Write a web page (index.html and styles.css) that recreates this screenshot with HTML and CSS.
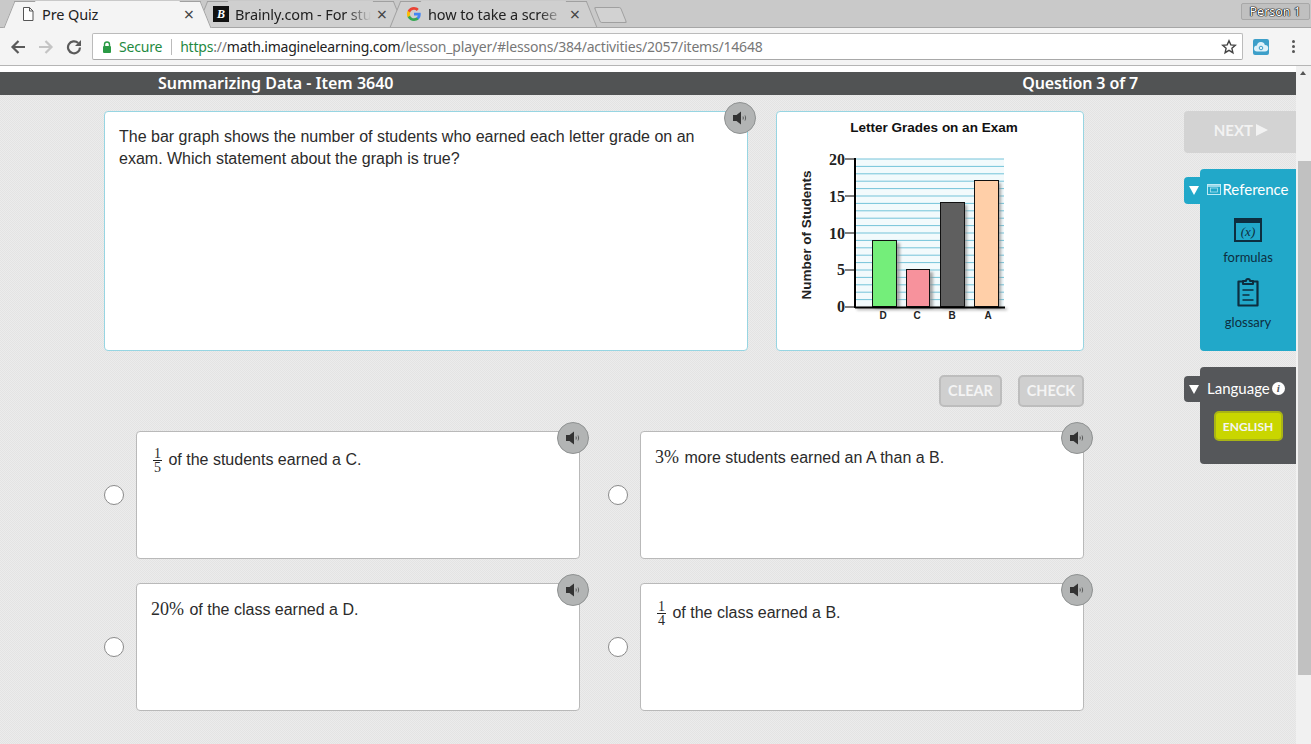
FILE: index.html
```html
<!DOCTYPE html>
<html lang="en">
<head>
  <meta charset="UTF-8" />
  <title>Pre Quiz</title>
  <link rel="stylesheet" href="styles.css">
</head>
<body>

  <div class="tabstrip">
    <div class="tab active">
      <svg class="favicon" viewBox="0 0 16 16"><path d="M3.500 1.500h6l3.500 3.500v9.500h-9.500z M9.500 1.500v3.500h3.500" fill="#fff" stroke="#555" stroke-width="1"/></svg>
      <span class="tab-title">Pre Quiz</span>
      <span class="tab-close">×</span>
    </div>
    <div class="tab">
      <span class="favicon brainly">B</span>
      <span class="tab-title">Brainly.com - For stu</span>
      <span class="tab-close">×</span>
    </div>
    <div class="tab">
      <svg class="favicon" viewBox="0 0 16 16">
        <path d="M14.700 8.200c0-.5 0-1-.1-1.400H8v2.700h3.800c-.2.900-.7 1.600-1.400 2.100v1.700h2.300c1.300-1.200 2-3 2-5.100z" fill="#4285f4"/>
        <path d="M8 15c1.900 0 3.500-.6 4.700-1.700l-2.300-1.700c-.6.400-1.400.7-2.400.7-1.800 0-3.400-1.200-3.900-2.900H1.700v1.800C2.900 13.500 5.300 15 8 15z" fill="#34a853"/>
        <path d="M4.100 9.400c-.3-.9-.3-1.900 0-2.800V4.800H1.700c-1 1.900-1 4.400 0 6.400z" fill="#fbbc05"/>
        <path d="M8 3.800c1 0 2 .4 2.700 1.100l2-2C11.500 1.700 9.800 1 8 1 5.300 1 2.900 2.500 1.700 4.800l2.400 1.800C4.600 5 6.200 3.800 8 3.800z" fill="#ea4335"/>
      </svg>
      <span class="tab-title">how to take a scree</span>
      <span class="tab-close">×</span>
    </div>
    <div class="newtab"></div>
    <div class="person">Person 1</div>
  </div>

  <div class="toolbar">
    <svg class="nav" viewBox="0 0 16 16"><path d="M15 8H2.500M8.500 2L2.500 8l6 6" fill="none" stroke="#5a5a5a" stroke-width="2.200"/></svg>
    <svg class="nav" viewBox="0 0 16 16"><path d="M1 8h12.500M7.500 2l6 6-6 6" fill="none" stroke="#c4c4c4" stroke-width="2.200"/></svg>
    <svg class="nav" viewBox="0 0 16 16"><path d="M14 8.500a6 6 0 1 1-1.800-4.500" fill="none" stroke="#5a5a5a" stroke-width="2.200"/><path d="M15 1v6H9z" fill="#5a5a5a"/></svg>
    <div class="omnibox">
      <svg class="lock" viewBox="0 0 12 14"><path d="M3.500 6V4.500a2.500 2.500 0 0 1 5 0V6" fill="none" stroke="#2a9a45" stroke-width="1.400"/><rect x="2" y="6" width="8" height="7" rx="1" fill="#2a9a45"/></svg>
      <span class="secure">Secure</span>
      <span class="url"><span class="scheme">https</span><span class="rest">://</span><span class="host">math.imaginelearning.com</span><span class="rest">/lesson_player/#lessons/384/activities/2057/items/14648</span></span>
      <svg class="star" viewBox="0 0 16 16"><path d="M8 1.800l1.800 4.100 4.500.4-3.400 3 1 4.400L8 11.400l-3.900 2.300 1-4.400-3.400-3 4.500-.4z" fill="none" stroke="#444" stroke-width="1.400"/></svg>
    </div>
    <div class="ext">
      <svg viewBox="0 0 16 16"><path d="M4 12.500a3 3 0 0 1 0-6 4 4 0 0 1 7.800-.6 3.300 3.300 0 0 1 .2 6.600z" fill="#dff2fa"/><circle cx="8" cy="9" r="1.800" fill="none" stroke="#3d9fc9" stroke-width="1"/></svg>
    </div>
    <div class="menu-dots"><i></i><i></i><i></i></div>
  </div>

  <div class="viewport">
    <div class="page">
      <div class="titlebar">
        <span>Summarizing Data - Item 3640</span>
        <span class="counter">Question 3 of 7</span>
      </div>

      <div class="content">
        <div class="lesson">
          <div class="top-row">
            <div class="card question">
              The bar graph shows the number of students who earned each letter grade on an exam. Which statement about the graph is true?
              <button class="speaker"><svg viewBox="0 0 16 16"><path d="M1 5h3.500L9 1.500v13L4.500 11H1z" fill="#333"/><path d="M11 6.500c.4.900.4 2.100 0 3M13 5.500c.8 1.500.8 3.500 0 5" fill="none" stroke="#333" stroke-width=".7"/></svg></button>
            </div>
            <div class="card graph">
              <svg viewBox="0 0 306 238" width="306" height="238">
                <defs>
                  <filter id="soft" x="-20%" y="-5%" width="160%" height="110%"><feGaussianBlur stdDeviation="1.500"/></filter>
                </defs>
                <text x="157" y="20" class="g-title">Letter Grades on an Exam</text>
                <rect x="80" y="47" width="147" height="148" fill="#f2fafc"/>
                <path d="M78 47h149M78 54.400h149M78 61.800h149M78 69.200h149M78 76.600h149M78 84h149M78 91.400h149M78 98.800h149M78 106.200h149M78 113.600h149M78 121h149M78 128.400h149M78 135.800h149M78 143.200h149M78 150.600h149M78 158h149M78 165.400h149M78 172.800h149M78 180.200h149M78 187.600h149" stroke="#74c3d9" stroke-width="1"/>
                <g fill="#888" filter="url(#soft)" opacity=".75">
                  <rect x="98" y="131" width="25" height="66"/>
                  <rect x="132" y="160" width="24" height="37"/>
                  <rect x="166" y="93" width="24" height="104"/>
                  <rect x="200" y="71" width="24" height="126"/>
                  <rect x="80" y="196" width="150" height="2"/>
                </g>
                <g stroke="#111" stroke-width="1">
                  <rect x="95.500" y="128.500" width="24" height="66" fill="#74ee7a"/>
                  <rect x="129.500" y="157.500" width="23" height="37" fill="#f7929c"/>
                  <rect x="163.500" y="90.500" width="24" height="104" fill="#5f5f5f"/>
                  <rect x="197.500" y="68.500" width="24" height="126" fill="#ffcfa8"/>
                </g>
                <path d="M78 46v150M78 195.500h150" stroke="#000" stroke-width="2" fill="none"/>
                <path d="M68 47h10M68 84h10M68 121h10M68 158h10M68 195h10" stroke="#000" stroke-width="1"/>
                <g class="g-num">
                  <text x="68" y="53">20</text>
                  <text x="68" y="90">15</text>
                  <text x="68" y="127">10</text>
                  <text x="68" y="163">5</text>
                  <text x="68" y="200">0</text>
                </g>
                <text class="g-axis" transform="translate(34 123) rotate(-90)">Number of Students</text>
                <g class="g-cat">
                  <text x="106" y="207">D</text>
                  <text x="140" y="207">C</text>
                  <text x="175" y="207">B</text>
                  <text x="211" y="207">A</text>
                </g>
              </svg>
            </div>
          </div>

          <div class="actions">
            <button class="action">CLEAR</button>
            <button class="action check">CHECK</button>
          </div>

          <div class="answers">
            <div class="answer">
              <span class="radio"></span>
              <div class="card choice">
                <span class="frac"><span>1</span><span>5</span></span> of the students earned a C.
                <button class="speaker"><svg viewBox="0 0 16 16"><path d="M1 5h3.500L9 1.500v13L4.500 11H1z" fill="#333"/><path d="M11 6.500c.4.900.4 2.100 0 3M13 5.500c.8 1.500.8 3.500 0 5" fill="none" stroke="#333" stroke-width=".7"/></svg></button>
              </div>
            </div>
            <div class="answer">
              <span class="radio"></span>
              <div class="card choice">
                <span class="math">3%</span> more students earned an A than a B.
                <button class="speaker"><svg viewBox="0 0 16 16"><path d="M1 5h3.500L9 1.500v13L4.500 11H1z" fill="#333"/><path d="M11 6.500c.4.900.4 2.100 0 3M13 5.500c.8 1.500.8 3.500 0 5" fill="none" stroke="#333" stroke-width=".7"/></svg></button>
              </div>
            </div>
            <div class="answer">
              <span class="radio"></span>
              <div class="card choice">
                <span class="math">20%</span> of the class earned a D.
                <button class="speaker"><svg viewBox="0 0 16 16"><path d="M1 5h3.500L9 1.500v13L4.500 11H1z" fill="#333"/><path d="M11 6.500c.4.900.4 2.100 0 3M13 5.500c.8 1.500.8 3.500 0 5" fill="none" stroke="#333" stroke-width=".7"/></svg></button>
              </div>
            </div>
            <div class="answer">
              <span class="radio"></span>
              <div class="card choice low">
                <span class="frac"><span>1</span><span>4</span></span> of the class earned a B.
                <button class="speaker"><svg viewBox="0 0 16 16"><path d="M1 5h3.500L9 1.500v13L4.500 11H1z" fill="#333"/><path d="M11 6.500c.4.900.4 2.100 0 3M13 5.500c.8 1.500.8 3.500 0 5" fill="none" stroke="#333" stroke-width=".7"/></svg></button>
              </div>
            </div>
          </div>
        </div>

        <aside class="sidebar">
          <button class="next">NEXT <span class="next-arrow"></span></button>

          <div class="panel reference">
            <div class="panel-tab"><span class="caret"></span></div>
            <div class="panel-head">
              <svg class="ref-icon" viewBox="0 0 14 12"><rect x=".5" y="1.500" width="13" height="10" fill="none" stroke="#bfeaf5"/><path d="M1 3h12" stroke="#bfeaf5" stroke-width="1.500"/><rect x="3.500" y="5" width="7" height="4" fill="none" stroke="#bfeaf5" stroke-width=".7"/></svg>
              <span>Reference</span>
            </div>
            <div class="tool formulas">
              <svg width="28" height="24" viewBox="0 0 28 24"><rect x="1" y="1" width="26" height="22" fill="none" stroke="#0d2e3f" stroke-width="2"/><rect x="1" y="1" width="26" height="4" fill="#0d2e3f"/><text x="14" y="18" class="fx">(x)</text></svg>
              <span>formulas</span>
            </div>
            <div class="tool glossary">
              <svg width="24" height="30" viewBox="0 0 24 30"><path d="M7 4.500H2.500v24h19v-24H17" fill="none" stroke="#0d2e3f" stroke-width="2.200" stroke-linejoin="round"/><path d="M7 7V4h3a2 2 0 0 1 4 0h3v3z" fill="none" stroke="#0d2e3f" stroke-width="2" stroke-linejoin="round"/><path d="M6.500 13h11M6.500 18h7M6.500 23h11" stroke="#0d2e3f" stroke-width="1.500"/></svg>
              <span>glossary</span>
            </div>
          </div>

          <div class="panel language">
            <div class="panel-tab"><span class="caret"></span></div>
            <div class="panel-head">
              <span>Language</span>
              <span class="info">i</span>
            </div>
            <button class="lang-btn">ENGLISH</button>
          </div>
        </aside>
      </div>
    </div>

    <div class="scrollbar">
      <span class="scroll-up"></span>
      <div class="thumb"></div>
    </div>
  </div>

</body>
</html>
```

FILE: styles.css
```css
* {
  box-sizing: border-box;
}

body {
  margin: 0;
  width: 1311px;
  height: 744px;
  overflow: hidden;
  font-family: 'Liberation Sans', Arial, sans-serif;
  color: #2b2b2b;
  background: #fff;
}

button {
  font-family: inherit;
  border: 0;
  padding: 0;
}

/* browser chrome */

.tabstrip {
  height: 28px;
  background: #c9c9c9;
  display: flex;
  padding-left: 20px;
  position: relative;
  border-bottom: 1px solid #a6a6a6;
}

.tab {
  width: 175px;
  height: 27px;
  margin-right: 18px;
  position: relative;
  display: flex;
  align-items: center;
  gap: 6px;
  font: 14.500px 'Noto Sans', sans-serif;
  color: #222;
  z-index: 1;
}

.tab::before,
.tab::after {
  content: '';
  position: absolute;
  top: 1px;
  bottom: 0;
  width: 20px;
  background: #cfcfcf;
  border-top: 1px solid #a0a0a0;
  z-index: -1;
}

.tab::before {
  left: -11px;
  transform: skewX(-22deg);
  border-left: 1px solid #a0a0a0;
}

.tab::after {
  right: -11px;
  transform: skewX(22deg);
  border-right: 1px solid #a0a0a0;
}

.tab.active {
  background: linear-gradient(#f4f4f4, #f4f4f4) no-repeat 0 1px;
  height: 28px;
  z-index: 2;
}

.tab.active::before,
.tab.active::after {
  background: #f4f4f4;
}

.tab:not(.active) {
  background: linear-gradient(#cfcfcf, #cfcfcf) no-repeat 0 1px;
}

.favicon {
  width: 16px;
  height: 16px;
  flex-shrink: 0;
}

.brainly {
  background: #111;
  color: #fff;
  font: italic bold 12px/16px 'Liberation Serif', serif;
  text-align: center;
}

.tab-title {
  flex: 1;
  min-width: 0;
  overflow: hidden;
  white-space: nowrap;
  letter-spacing: -.12px;
  -webkit-mask-image: linear-gradient(90deg, #000 82%, transparent);
  mask-image: linear-gradient(90deg, #000 82%, transparent);
}

.tab.active .tab-title {
  -webkit-mask-image: none;
  mask-image: none;
}

.tab-close {
  font-size: 18px;
  line-height: 16px;
  color: #444;
  margin-right: 1px;
}

.newtab {
  width: 27px;
  height: 16px;
  margin: 7px 0 0 -2px;
  background: #d2d2d2;
  border: 1px solid #a0a0a0;
  border-radius: 2px;
  transform: skewX(22deg);
}

.person {
  margin: 3px 1px 0 auto;
  height: 17px;
  padding: 0 8px;
  font: 12.500px/15px 'Noto Sans', sans-serif;
  color: #fff;
  text-shadow: 0 0 1px #000, 0 0 1px #000, 0 0 1px #000, 0 0 1px #000;
  background: #c0c0c0;
  border: 1px solid #a8a8a8;
  border-radius: 2px;
}

.toolbar {
  height: 38px;
  background: #f4f4f4;
  border-bottom: 1px solid #b5b5b5;
  display: flex;
  align-items: center;
  padding: 0 9px 0 10px;
}

.nav {
  width: 16px;
  height: 16px;
  margin-right: 12px;
  flex-shrink: 0;
}

.omnibox {
  margin-left: -2px;
  width: 1151px;
  height: 27px;
  background: #fff;
  border: 1px solid #bbb;
  border-bottom-color: #a8a8a8;
  border-radius: 2px;
  display: flex;
  align-items: center;
  padding: 0 5px 0 8px;
  font: 14px 'Noto Sans', sans-serif;
}

.lock {
  width: 12px;
  height: 14px;
  margin-right: 6px;
}

.secure {
  color: #1f8a3f;
  padding-right: 9px;
  margin-right: 8px;
  border-right: 1px solid #bbb;
  line-height: 16px;
  letter-spacing: -.2px;
}

.url {
  flex: 1;
  white-space: nowrap;
  letter-spacing: -.2px;
}

.scheme {
  color: #1f8a3f;
}

.rest {
  color: #777;
}

.host {
  color: #222;
}

.star {
  width: 16px;
  height: 16px;
}

.ext {
  width: 16px;
  height: 16px;
  margin-left: 10px;
  background: #3d9fc9;
  border-radius: 2px;
}

.ext svg {
  display: block;
}

.menu-dots {
  margin-left: 23px;
  display: flex;
  flex-direction: column;
  gap: 2px;
}

.menu-dots i {
  width: 3px;
  height: 3px;
  border-radius: 50%;
  background: #555;
}

/* page */

.viewport {
  display: flex;
  height: 678px;
}

.page {
  width: 1296px;
  padding-top: 6px;
  background: #fff;
}

.titlebar {
  height: 23px;
  background: #515354;
  color: #fff;
  display: flex;
  justify-content: space-between;
  padding: 0 158px;
  font: 600 16px/22px 'Noto Sans', sans-serif;
}

.counter {
  letter-spacing: -.13px;
}

.content {
  height: 649px;
  display: flex;
  padding: 16px 0 0 104px;
  background: repeating-conic-gradient(#e3e3e3 0 25%, #ececec 0 50%) 0 0 / 2px 2px;
}

.lesson {
  width: 980px;
  margin-right: 100px;
}

.top-row {
  display: flex;
  justify-content: space-between;
}

.card {
  background: #fff;
  border: 1px solid #b9b9b9;
  border-radius: 4px;
  position: relative;
}

.question {
  width: 644px;
  height: 240px;
  padding: 14px 14px;
  font-size: 16px;
  line-height: 22px;
  border-color: #97d5e2;
}

.graph {
  width: 308px;
  height: 240px;
  border-color: #97d5e2;
}

.graph svg {
  display: block;
}

.g-title {
  font: bold 13.500px 'Liberation Sans', sans-serif;
  text-anchor: middle;
  fill: #111;
}

.g-num text {
  font: bold 16px 'Liberation Serif', serif;
  text-anchor: end;
  fill: #222;
}

.g-axis {
  font: bold 13.500px 'Liberation Sans', sans-serif;
  text-anchor: middle;
  fill: #222;
}

.g-cat text {
  font: bold 10px 'Liberation Sans', sans-serif;
  text-anchor: middle;
  fill: #222;
}

.speaker {
  position: absolute;
  top: -10px;
  right: -10px;
  width: 32px;
  height: 32px;
  border-radius: 50%;
  background: #b2b4b4;
  border: 1px solid #8f9292;
  display: flex;
  align-items: center;
  justify-content: center;
}

.speaker svg {
  width: 16px;
  height: 16px;
}

.question .speaker {
  right: -9px;
}

.actions {
  display: flex;
  justify-content: flex-end;
  gap: 16px;
  margin: 24px 0;
}

.action {
  width: 63px;
  height: 32px;
  padding-bottom: 2px;
  border-radius: 5px;
  background: #cfcfcf;
  border: 2px solid #bdbdbd;
  color: #f4f4f4;
  font: bold 14.500px 'Lato', sans-serif;
}

.action.check {
  width: 66px;
}

.answers {
  display: grid;
  grid-template-columns: 476px 476px;
  justify-content: space-between;
  row-gap: 24px;
}

.answer {
  display: flex;
  align-items: center;
  gap: 12px;
}

.radio {
  width: 20px;
  height: 20px;
  border-radius: 50%;
  background: #fff;
  border: 1px solid #8a8a8a;
  flex-shrink: 0;
}

.choice {
  width: 444px;
  height: 128px;
  padding: 15px 14px;
  font-size: 16px;
  line-height: 22px;
}

.choice.low {
  padding-top: 16px;
}

.math {
  font: 18px 'Liberation Serif', serif;
  margin-right: 1px;
}

.frac {
  display: inline-flex;
  flex-direction: column;
  vertical-align: middle;
  width: 9px;
  margin: 0 2px;
  font: 14px/13px 'Liberation Serif', serif;
  text-align: center;
}

.frac span + span {
  border-top: 1px solid #222;
}

/* sidebar */

.sidebar {
  width: 112px;
}

.next {
  display: block;
  width: 112px;
  height: 42px;
  padding: 0 0 4px 2px;
  background: #d3d3d3;
  border-radius: 4px 0 0 4px;
  color: #f2f2f2;
  font: bold 15px 'Lato', sans-serif;
  margin-bottom: 16px;
}

.next-arrow {
  display: inline-block;
  border-left: 12px solid #f2f2f2;
  border-top: 6px solid transparent;
  border-bottom: 6px solid transparent;
}

.panel {
  margin-left: 16px;
  width: 96px;
  position: relative;
  border-radius: 4px 0 0 4px;
  color: #fff;
}

.reference {
  height: 182px;
  background: #21a8c9;
  margin-bottom: 16px;
  padding-top: 11px;
}

.language {
  height: 97px;
  background: #55575a;
  padding-top: 12px;
}

.panel-tab {
  position: absolute;
  left: -16px;
  top: 8px;
  width: 16px;
  height: 27px;
  border-radius: 4px 0 0 4px;
  background: inherit;
  display: flex;
  align-items: center;
  padding-left: 5px;
}

.language .panel-tab {
  top: 9px;
  height: 26px;
}

.caret {
  border-top: 9px solid #fff;
  border-left: 5px solid transparent;
  border-right: 5px solid transparent;
}

.panel-head {
  display: flex;
  align-items: center;
  justify-content: center;
  gap: 1px;
  font: 15px/18px 'Lato', sans-serif;
}

.language .panel-head {
  justify-content: flex-start;
  padding-left: 7px;
}

.ref-icon {
  width: 14px;
  height: 12px;
}

.tool {
  display: flex;
  flex-direction: column;
  align-items: center;
  color: #0d2e3f;
  font: 13px/16px 'Lato', sans-serif;
  gap: 7px;
}

.formulas {
  margin-top: 20px;
}

.glossary {
  margin-top: 12px;
}

.fx {
  font: italic 13px 'Liberation Serif', serif;
  fill: #0d2e3f;
  text-anchor: middle;
}

.info {
  width: 13px;
  height: 13px;
  margin-left: 1px;
  border-radius: 50%;
  background: #fff;
  color: #55575a;
  font: italic bold 11px/13px 'Liberation Serif', serif;
  text-align: center;
}

.lang-btn {
  display: block;
  width: 69px;
  height: 30px;
  margin: 14px auto 0;
  border-radius: 5px;
  background: #c9d600;
  border: 2px solid #a9b415;
  color: #f4f4f4;
  font: bold 12px 'Lato', sans-serif;
}

.scrollbar {
  width: 15px;
  background: #f1f1f1;
  position: relative;
}

.scroll-up {
  position: absolute;
  left: 4px;
  top: 5px;
  border-bottom: 4px solid #555;
  border-left: 3.500px solid transparent;
  border-right: 3.500px solid transparent;
}

.thumb {
  position: absolute;
  top: 95px;
  left: 2px;
  width: 13px;
  height: 514px;
  background: #c1c1c1;
}
```
